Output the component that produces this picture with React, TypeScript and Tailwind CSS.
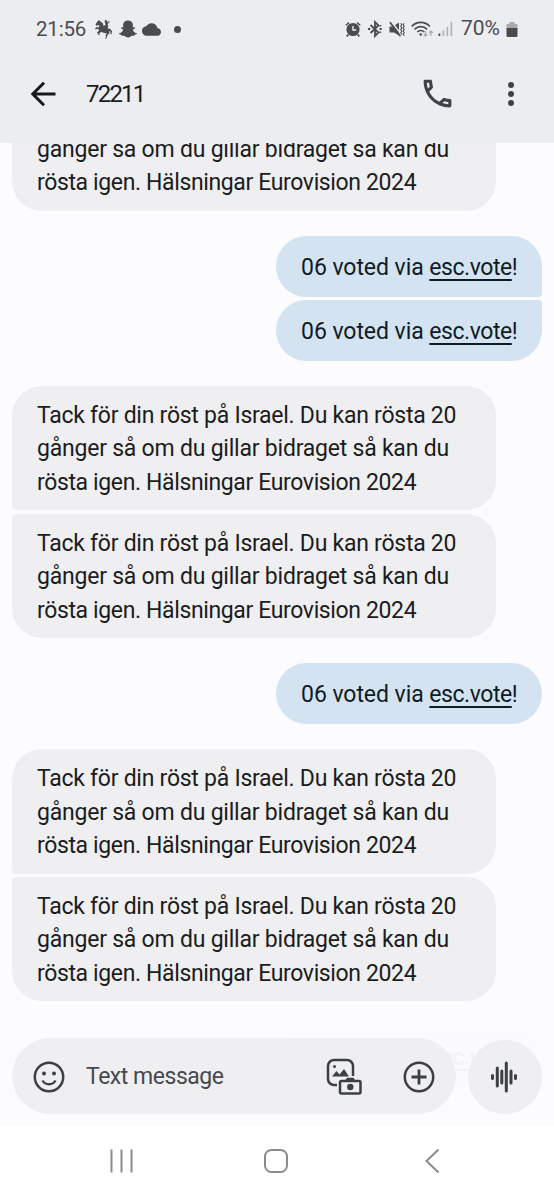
import clsx from "clsx"
import { FaSnapchatGhost } from "react-icons/fa"
import { MdCloud, MdOutlinePhone } from "react-icons/md"

type Message = {
  from: "me" | "them"
  position?: "first" | "last"
}

const messages: Message[] = [
  { from: "them" },
  { from: "me", position: "first" },
  { from: "me", position: "last" },
  { from: "them", position: "first" },
  { from: "them", position: "last" },
  { from: "me" },
  { from: "them", position: "first" },
  { from: "them", position: "last" },
]

function RiderIcon() {
  return (
    <svg viewBox="0 0 18 20" className="ml-[9px] h-5 w-[18px]" fill="currentColor">
      <path d="M2 3 4 1l1.500 1.500L8 4.500 8.500 7l2-1L10 3.500 9.500 2 11 .8l1.300 1.300-.3 1.600 2.200-1.700.6.6-2.200 2.600.7 2.400-1 1.600 2.500.6 2.200 2.300-.6 3.300-1-.4.1-2.400-1.200-.5.2 1.900-2.200 2.600-.8 3-1.500.1.9-1.500-.3-2.300 1.400-1.300-2.500-.7-3.300-.8-2 1.200.7 1.500-1 .5L2 13.400l2.300-2.100-1.700-1.500-1.800.7L0 9.400l2-1.300 2 .4L4.200 6 1.300 6.800.5 5.600z" />
    </svg>
  )
}

function AlarmIcon() {
  return (
    <svg viewBox="0 0 16 17" className="h-[17px] w-4" fill="none" stroke="currentColor">
      <circle cx="8" cy="8.500" r="6.600" fill="currentColor" stroke="none" />
      <path d="M.8 4.300 4 1.500M15.200 4.300 12 1.500" strokeWidth="1.500" />
      <path d="m3.200 13.500-1.400 2M12.800 13.500l1.400 2" strokeWidth="1.800" />
      <path d="M8 5v4h3.200" stroke="#ecedf1" strokeWidth="1.400" />
    </svg>
  )
}

function BluetoothIcon() {
  return (
    <svg viewBox="0 0 16 18" className="ml-[6px] h-[18px] w-4" fill="none" stroke="currentColor" strokeWidth="1.800">
      <path d="m3.500 5 8 7.500L8 16V2l3.500 3.500-8 7.500" />
      <path d="M1 9h2.200M12.500 9h2.200" strokeWidth="2" />
      <path d="m12.500 6.300 1.700-.9M12.500 11.700l1.700.9" strokeWidth="1.200" />
    </svg>
  )
}

function MutedIcon() {
  return (
    <svg viewBox="0 0 17 17" className="ml-[6px] h-[17px] w-[17px]" fill="none" stroke="currentColor">
      <path d="M.5 5.500h3.500L10 1.500v13L5 11.500H.5z" fill="currentColor" stroke="none" />
      <path d="m2.500 .8 10 13" stroke="#ecedf1" strokeWidth="1.500" />
      <path d="m1 1.300 10.500 14" strokeWidth="1.700" />
      <path d="m11.800 2.200 1 1.500-1 1.600 1 1.600-1 1.600 1 1.600-1 1.600 1 1.600M15.200 2.200l-1 1.500 1 1.600-1 1.600 1 1.600-1 1.600 1 1.600-1 1.600 1 1.500" strokeWidth="1.100" />
    </svg>
  )
}

function WifiIcon() {
  return (
    <svg viewBox="0 0 23 18" className="ml-[5px] h-[18px] w-[23px]" fill="none" stroke="currentColor">
      <path d="M.8 6.300c5-5.200 13-5.200 18 0M3.500 9.300c3.700-3.600 9-3.600 12.600 0M6.300 12c2-2 5-2 7 0" strokeWidth="1.700" />
      <circle cx="9.700" cy="14.500" r="1.300" fill="currentColor" stroke="none" />
      <path d="M14.500 11v5m-1.800-1.800 1.800 1.900 1.800-1.900M20 16v-5m-1.800 1.800 1.800-1.900 1.800 1.900" stroke="#aaacb0" strokeWidth="1.300" />
    </svg>
  )
}

function SignalIcon() {
  return (
    <svg viewBox="0 0 15 16" className="ml-1 h-4 w-[15px]" fill="#b1b3b7">
      <path d="M.5 12.500h1.800V15H.5z" fill="#4a4c50" />
      <path d="M4.500 9.500h1.700V15H4.500zM8.500 6h1.700v9H8.500zM12.500 1h1.700v14h-1.700z" />
    </svg>
  )
}

function BatteryIcon() {
  return (
    <svg viewBox="0 0 12 17" className="h-[17px] w-3" fill="currentColor">
      <path d="M3.500 1h5v2h2a1 1 0 0 1 1 1v4H.5V4a1 1 0 0 1 1-1h2z" fill="#a9abaf" />
      <path d="M.5 7h11v7.500a1.500 1.500 0 0 1-1.500 1.500H2a1.500 1.500 0 0 1-1.500-1.500z" />
    </svg>
  )
}

function StatusBar() {
  return (
    <div className="flex h-[58px] items-center justify-between pr-[36px] pl-[36px] text-[#4a4c50]">
      <div className="flex items-center">
        <span className="w-[50px] text-[20.500px] tracking-[-0.200px]">21:56</span>
        <RiderIcon />
        <FaSnapchatGhost className="ml-[6px] size-[18px]" />
        <MdCloud className="ml-[5px] size-[19px]" />
        <span className="ml-[13px] size-[7px] rounded-full bg-[#4a4c50]" />
      </div>
      <div className="flex items-center">
        <AlarmIcon />
        <BluetoothIcon />
        <MutedIcon />
        <WifiIcon />
        <SignalIcon />
        <span className="ml-[8px] w-[45px] text-[21px]">70%</span>
        <BatteryIcon />
      </div>
    </div>
  )
}

function Header() {
  return (
    <header className="h-[143px] shrink-0 bg-[#ecedf1]">
      <StatusBar />
      <div className="flex h-[72px] items-center pl-[30px] text-[#3f4347]">
        <svg viewBox="0 0 26 26" className="size-[26px] text-[#16181a]" fill="none" stroke="currentColor" strokeWidth="3">
          <path d="M25.500 13H3M14 1.800 2.800 13 14 24.200" />
        </svg>
        <h1 className="ml-[30px] text-[24px] tracking-[-1.800px] text-[#1b1c1e]">72211</h1>
        <MdOutlinePhone className="mb-[2px] ml-auto size-[37px]" />
        <div className="mr-[40px] ml-[52px] flex flex-col gap-[3px]">
          <span className="size-[6px] rounded-full bg-current" />
          <span className="size-[6px] rounded-full bg-current" />
          <span className="size-[6px] rounded-full bg-current" />
        </div>
      </div>
    </header>
  )
}

function VoteText() {
  return (
    <p className="text-[23px] leading-[33.300px] tracking-[-0.050px] whitespace-nowrap">
      06 voted via{" "}
      <a className="tracking-[-0.450px] underline decoration-2 underline-offset-4 [text-decoration-skip-ink:none]">esc.vote</a>!
    </p>
  )
}

function Bubble({ from, position }: Message) {
  if (from === "me") {
    return (
      <div
        className={clsx(
          "h-[61px] w-[266px] shrink-0 self-end rounded-[30.500px] bg-[#d4e3f1] pt-[15px] pl-[25px] text-[#101b25]",
          position === "first" && "rounded-br-[4px]",
          position === "last" && "mt-[3.500px] rounded-tr-[4px]",
          position !== "last" && "mt-[25px]",
        )}
      >
        <VoteText />
      </div>
    )
  }
  return (
    <div
      className={clsx(
        "h-[124.300px] w-[484px] shrink-0 rounded-[30px] bg-[#efeff1] pt-[13px] pl-[25px] text-[23px] leading-[33.300px] whitespace-nowrap text-[#1b1c1e]",
        position === "first" && "mt-[25px] rounded-bl-[4px]",
        position === "last" && "mt-[3.500px] rounded-tl-[4px]",
      )}
    >
      <p className="tracking-[-0.260px]">Tack för din röst på Israel. Du kan rösta 20</p>
      <p className="tracking-[-0.220px]">gånger så om du gillar bidraget så kan du</p>
      <p className="tracking-[-0.370px]">rösta igen. Hälsningar Eurovision 2024</p>
    </div>
  )
}

function GalleryIcon() {
  return (
    <svg viewBox="0 0 36 38" className="h-[38px] w-9" fill="none" stroke="currentColor" strokeWidth="2.500">
      <path d="M11 27H8a6 6 0 0 1-6-6V8a6 6 0 0 1 6-6h13a6 6 0 0 1 6 6v10" />
      <path d="m6 18.500 4.500-5.500 3 3.500L18 11l5 7.500z" fill="currentColor" stroke="none" />
      <circle cx="8.500" cy="8.500" r="1.500" fill="currentColor" stroke="none" />
      <rect x="14" y="23" width="20.500" height="12.500" rx="1.500" />
      <path d="M20 22.500 21.500 20.500h5.500l1.500 2z" fill="currentColor" strokeWidth="1.500" />
      <circle cx="24.300" cy="29" r="3.200" fill="currentColor" stroke="none" />
    </svg>
  )
}

function Composer() {
  return (
    <div className="relative flex h-[88px] shrink-0 pl-[12px] text-[#3c4043]">
      {/* next message fading out behind the composer */}
      <div className="absolute -top-[11px] left-[276px] h-[61px] w-[266px] rounded-[30px] bg-[#fafaff] pt-[14px] pl-[25px] text-[#f1f1f6]">
        <VoteText />
      </div>
      <div className="relative flex h-[76px] w-[444px] items-center rounded-full bg-[#efeff1] pt-[2px] pr-[20px] pl-[20px]">
        <svg viewBox="0 0 34 34" className="size-[34px]" fill="none" stroke="currentColor" strokeWidth="2.500">
          <circle cx="17" cy="17" r="14.200" />
          <circle cx="12" cy="13.500" r="2" fill="currentColor" stroke="none" />
          <circle cx="22" cy="13.500" r="2" fill="currentColor" stroke="none" />
          <path d="M10.500 20.500c3 5 10 5 13 0" strokeWidth="2.300" />
        </svg>
        <span className="mt-px ml-[20px] text-[23px] tracking-[-0.470px] text-[#47494d]">Text message</span>
        <div className="ml-auto flex items-center gap-[40px]">
          <GalleryIcon />
          <svg viewBox="0 0 34 34" className="size-[34px]" fill="none" stroke="currentColor" strokeWidth="2.500">
            <circle cx="17" cy="17" r="14.200" />
            <path d="M17 9.500v15M9.500 17h15" strokeWidth="2.800" />
          </svg>
        </div>
      </div>
      <div className="relative mt-[2px] ml-[12px] flex size-[74px] items-center justify-center rounded-full bg-[#efeff1]">
        <svg viewBox="0 0 28 32" className="mr-[2px] h-8 w-7" fill="none" stroke="currentColor" strokeWidth="3" strokeLinecap="round">
          <path d="M2.500 14.500v3M7.300 7v18M11.800 10v12M16.300 2v28M21 10v12M25.500 14.500v3" />
        </svg>
      </div>
    </div>
  )
}

function NavBar() {
  return (
    <nav className="flex h-[74px] shrink-0 items-center bg-white pb-[4px] pl-[108px] text-[#8b8b8b]">
      <svg viewBox="0 0 26 26" className="size-[26px]" fill="none" stroke="currentColor" strokeWidth="2">
        <path d="M3.500 1.500v23M13.500 1.500v23M23.500 1.500v23" />
      </svg>
      <svg viewBox="0 0 26 26" className="ml-[129px] size-[26px]" fill="none" stroke="currentColor" strokeWidth="2">
        <rect x="2" y="2" width="22" height="22" rx="6.500" />
      </svg>
      <svg viewBox="0 0 16 26" className="ml-[135px] h-[26px] w-4" fill="none" stroke="currentColor" strokeWidth="2">
        <path d="M14.500 1.500 2.500 13l12 11.500" />
      </svg>
    </nav>
  )
}

export default function App() {
  return (
    <div className="flex h-[1200px] w-[554px] flex-col overflow-hidden bg-[#fcfcff] font-['Roboto',sans-serif]">
      <Header />
      <main className="flex min-h-0 flex-1 flex-col justify-end overflow-hidden px-[12px] pb-[36.700px]">
        {messages.map((message, i) => (
          <Bubble key={i} {...message} />
        ))}
      </main>
      <Composer />
      <NavBar />
    </div>
  )
}
